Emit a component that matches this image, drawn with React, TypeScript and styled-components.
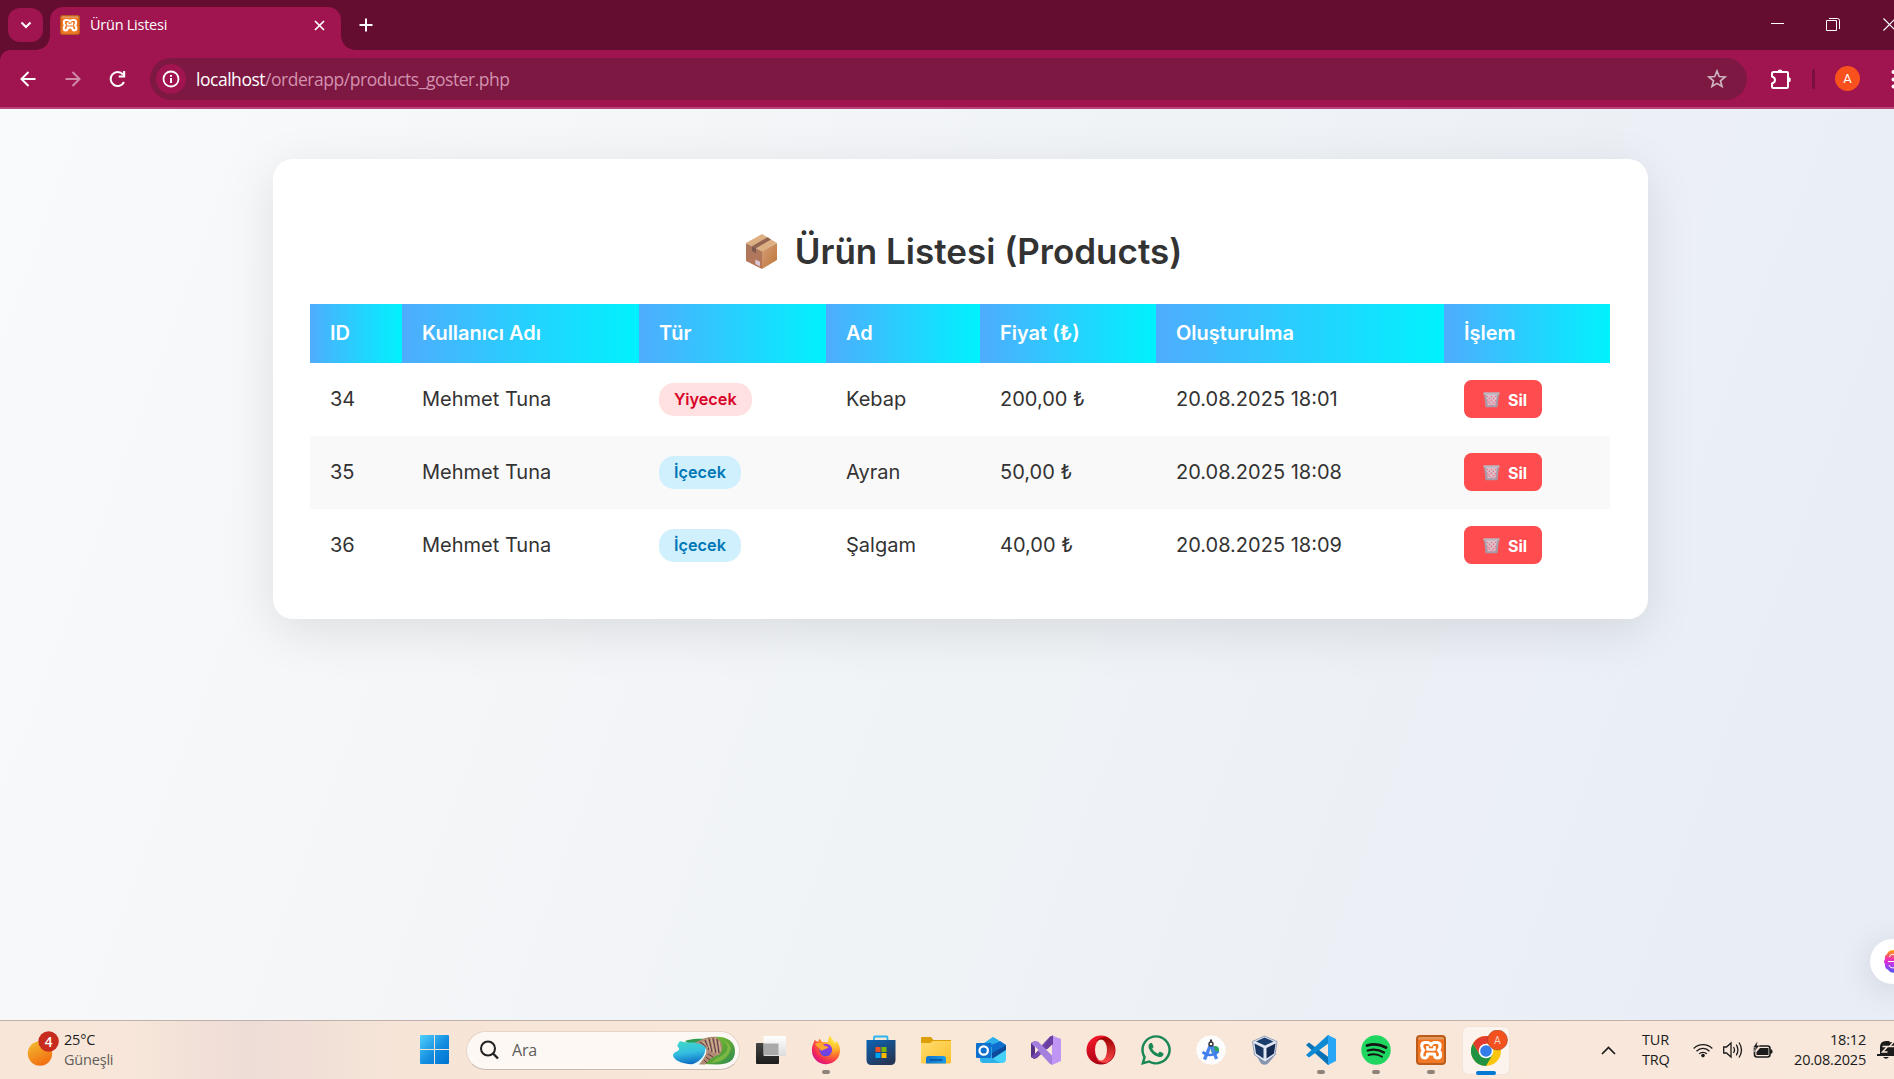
import React from "react";
import styled, { createGlobalStyle } from "styled-components";
import { FaWhatsapp } from "react-icons/fa";

const ui = `"Open Sans", "Noto Sans", sans-serif`;

const GlobalStyle = createGlobalStyle`
  html, body { margin: 0; overflow: hidden; }
  * { box-sizing: border-box; }
  svg { display: block; flex: none; }
`;

const Screen = styled.div`
  width: 1894px;
  height: 1079px;
  display: flex;
  flex-direction: column;
  overflow: hidden;
  font-family: ${ui};
`;

/* ---------- browser chrome ---------- */

const TabStrip = styled.header`
  height: 50px;
  flex: none;
  display: flex;
  align-items: flex-start;
  background: #640d30;
  color: #fff;
`;

const TabMenu = styled.button`
  width: 35px;
  height: 34px;
  margin: 8px 7px 0 8px;
  padding: 0;
  border: 0;
  border-radius: 12px;
  background: #a0154f;
  display: grid;
  place-items: center;
`;

const Tab = styled.div`
  position: relative;
  width: 291px;
  height: 43px;
  margin-top: 7px;
  padding: 0 16px 7px 10px;
  display: flex;
  align-items: center;
  border-radius: 13px 13px 0 0;
  background: #a0154f;
  &::before,
  &::after {
    content: "";
    position: absolute;
    bottom: 0;
    width: 14px;
    height: 14px;
  }
  &::before {
    left: -14px;
    background: radial-gradient(circle at 0 0, transparent 13.5px, #a0154f 14px);
  }
  &::after {
    right: -14px;
    background: radial-gradient(circle at 100% 0, transparent 13.5px, #a0154f 14px);
  }
`;

const TabTitle = styled.span`
  flex: 1;
  margin-left: 10px;
  font-size: 14.5px;
  letter-spacing: -0.25px;
  line-height: 20px;
`;

const NewTab = styled.span`
  margin: 18px 0 0 18px;
`;

const WindowButtons = styled.div`
  margin-left: auto;
  height: 50px;
  width: 124px;
  display: flex;
  gap: 42px;
  padding-top: 18px;
`;

const Toolbar = styled.div`
  height: 59px;
  flex: none;
  display: flex;
  align-items: center;
  background: radial-gradient(circle at 10px 10px, #a0154f 9.5px, #640d30 10px) 0 0 / 10px 10px no-repeat, #a0154f;
  border-bottom: 2px solid #b9447a;
`;

const NavSlot = styled.span<{ $w: number; $dim?: boolean }>`
  width: ${(p) => p.$w}px;
  flex: none;
  display: flex;
  justify-content: center;
  opacity: ${(p) => (p.$dim ? 0.5 : 1)};
`;

const AddressBar = styled.div`
  width: 1597px;
  height: 42px;
  flex: none;
  border-radius: 21px;
  background: #7d1842;
  display: flex;
  align-items: center;
  padding: 0 20px 0 6px;
`;

const SiteInfo = styled.span`
  width: 30px;
  height: 30px;
  border-radius: 50%;
  background: #a0154f;
  display: grid;
  place-items: center;
`;

const Url = styled.span`
  flex: 1;
  margin-left: 10px;
  color: #d391af;
  font-size: 17.5px;
  line-height: 26px;
  letter-spacing: -0.47px;
  b {
    font-weight: 400;
    color: #fff;
  }
`;

const ToolbarDivider = styled.span`
  width: 3px;
  height: 20px;
  flex: none;
  border-radius: 2px;
  background: #7a0f3d;
  margin: 0 20px 0 -1px;
`;

const Avatar = styled.span`
  width: 25px;
  height: 25px;
  flex: none;
  border-radius: 50%;
  background: #f9511d;
  color: #fff;
  font: 13px/25px Roboto, sans-serif;
  text-align: center;
  margin-right: 31px;
`;

/* ---------- page ---------- */

const Page = styled.main`
  position: relative;
  height: 911px;
  flex: none;
  overflow: hidden;
  padding: 50px 246px 0 273px;
  background: linear-gradient(110deg, #f9fafb 0%, #f0f3f6 52%, #e8edf6 96%);
  font-family: Inter, "Noto Sans", sans-serif;
  color: #333;
`;

const Card = styled.section`
  width: 1375px;
  height: 460px;
  padding: 65px 38px 0 37px;
  border-radius: 20px;
  background: #fff;
  box-shadow: 0 12px 50px rgba(0, 0, 0, 0.1);
`;

const Title = styled.h2`
  margin: 0 0 26px;
  height: 54px;
  padding-left: 7px;
  display: flex;
  align-items: center;
  justify-content: center;
  gap: 16px;
  font-size: 35px;
  font-weight: 600;
  line-height: 54px;
`;

const Table = styled.table`
  width: 1300px;
  table-layout: fixed;
  border-collapse: collapse;
  font-size: 20px;
`;

const Head = styled.th`
  height: 59px;
  padding: 0 0 1px 20px;
  text-align: left;
  font-weight: 600;
  color: #fff;
  background: linear-gradient(to right, #4facfe, #00f2fe);
`;

const Row = styled.tr`
  height: 73px;
  &:nth-child(even) {
    background: #f9f9f9;
  }
`;

const Cell = styled.td`
  padding: 0 0 2px 20px;
`;

const Badge = styled.span<{ $food?: boolean }>`
  display: block;
  width: fit-content;
  height: 33px;
  margin-top: 2px;
  padding: 0 15px;
  border-radius: 15px;
  font-size: 16.25px;
  font-weight: 600;
  line-height: 32px;
  background: ${(p) => (p.$food ? "#ffe1e1" : "#d0f0fd")};
  color: ${(p) => (p.$food ? "#d90429" : "#0077b6")};
`;

const DeleteButton = styled.button`
  width: 78px;
  height: 38px;
  display: flex;
  align-items: center;
  padding: 2px 0 0 19px;
  gap: 8px;
  border: 0;
  border-radius: 7.5px;
  background: #ff4d4f;
  color: #fff;
  font: 700 16px Inter, sans-serif;
`;

const Assistant = styled.div`
  position: absolute;
  left: 1870px;
  top: 830px;
  width: 45px;
  height: 45px;
  padding: 11px 0 0 14px;
  border-radius: 50%;
  background: #fff;
  box-shadow: 0 5px 34px rgba(0, 0, 0, 0.12);
`;

/* ---------- taskbar ---------- */

const Taskbar = styled.footer`
  height: 59px;
  flex: none;
  display: flex;
  align-items: center;
  border-top: 1px solid #bfb2aa;
  background: linear-gradient(90deg, #f8e7d8 0, #f7e6d9 130px, #eedcd7 250px, #f6e5d7 400px, #f9e8d8 900px, #f8e7db 1894px);
  color: #1b1b1b;
`;

const Weather = styled.div`
  width: 407px;
  display: flex;
  padding-left: 26px;
`;

const Lines = styled.div<{ $right?: boolean }>`
  display: flex;
  flex-direction: column;
  font-size: 14.5px;
  line-height: 20px;
  letter-spacing: -0.2px;
  text-align: ${(p) => (p.$right ? "right" : "left")};
  em {
    font-style: normal;
    color: #625d58;
  }
`;

const Search = styled.div`
  width: 274px;
  height: 39px;
  margin: 0 3px 0 4px;
  border: 1px solid #e6d5c8;
  border-bottom-color: #c9bbb1;
  border-radius: 20px;
  background: #fdf8f4;
  display: flex;
  align-items: center;
  padding: 0 3px 0 13px;
  color: #5f5c59;
  font-size: 16px;
  span {
    flex: 1;
    margin-left: 13px;
    letter-spacing: -0.2px;
  }
`;

const AppSlot = styled.div<{ $active?: boolean }>`
  width: ${(p) => (p.$active ? 48 : 55)}px;
  height: ${(p) => (p.$active ? 49 : 58)}px;
  margin-left: ${(p) => (p.$active ? 4 : 0)}px;
  padding-top: ${(p) => (p.$active ? 9 : 14)}px;
  border-radius: 6px;
  background: ${(p) => (p.$active ? "#fdf3ed" : "transparent")};
  border: ${(p) => (p.$active ? "1px solid #f2e2d8" : "0")};
  display: flex;
  flex-direction: column;
  align-items: center;
  gap: 5px;
`;

const ChromeWrap = styled.div`
  margin: -6px -8px 0 0;
`;

const Running = styled.i<{ $active?: boolean }>`
  width: ${(p) => (p.$active ? 20 : 8)}px;
  height: 4px;
  flex: none;
  border-radius: 2px;
  background: ${(p) => (p.$active ? "#0078d4" : "#8d837b")};
`;

const Tray = styled.div`
  margin-left: auto;
  width: 294px;
  height: 58px;
  display: flex;
  align-items: center;
`;

const TrayItem = styled.div<{ $w: number; $end?: boolean }>`
  width: ${(p) => p.$w}px;
  flex: none;
  display: flex;
  justify-content: ${(p) => (p.$end ? "flex-end" : "flex-start")};
`;

/* ---------- drawings ---------- */

const Xampp = ({ size }: { size: number }) => (
  <svg width={size} height={size} viewBox="0 0 30 30">
    <defs><linearGradient id="xa" x1="0" y1="0" x2="0" y2="1"><stop stopColor="#e3975c" /><stop offset=".1" stopColor="#e3975c" /><stop offset=".16" stopColor="#f2701c" /><stop offset="1" stopColor="#f07b2a" /></linearGradient></defs>
    <rect x="1" y="1" width="28" height="28" rx="3" fill="url(#xa)" stroke="#bb5c1b" strokeWidth="2" />
    <path d="M9 7.500H11Q14 7.500 15 10 16 7.500 19 7.500H21Q24.500 7.500 24 11.500 24 14 22.500 15.300 24.500 17 24.500 20 24.500 23 21.500 23 19 23 18.500 20.500V19H11.500V20.500Q11 23 8.500 23 5.500 23 5.800 19.500 6 17 7.500 15.300 5.500 13.500 5.800 10.500 6 7.500 9 7.500Z" fill="none" stroke="#fff" strokeWidth="3.200" strokeLinejoin="round" />
    <path d="M11.500 11V14.500H18.500V11" fill="none" stroke="#fff" strokeWidth="2.600" strokeLinejoin="round" />
  </svg>
);

const Box = () => (
  <svg width="34" height="36" viewBox="0 0 34 36">
    <defs>
      <linearGradient id="bl" x1="0" y1="0" x2="0" y2="1"><stop stopColor="#a9795f" /><stop offset="1" stopColor="#b87558" /></linearGradient>
      <linearGradient id="br" x1="0" y1="0" x2="1" y2="1"><stop stopColor="#d69f7c" /><stop offset="1" stopColor="#bd7433" /></linearGradient>
    </defs>
    <path d="M1 10 17 18V36L1 28Z" fill="url(#bl)" />
    <path d="M17 18 32 10V27L17 36Z" fill="url(#br)" />
    <path d="M17 1 32 10 17 18.500 1 10Z" fill="#dcb082" />
    <path d="M22.500 4.300 26 6.400 11 15.300 7 13.200Z" fill="#936451" />
    <path d="M7 13.200 11 15.300V20.200L7 18Z" fill="#7d5850" />
    <path d="M10.300 26.500 15 28.800V33.600L10.300 31Z" fill="#d9c7d8" />
  </svg>
);

const Bin = () => (
  <svg width="17" height="17" viewBox="0 0 17 17">
    <path d="M1.500 2H15.500L14 16H3Z" fill="#dcbfcb" />
    <path d="M4 5 12.500 14M8 5l5 5M4.500 10l4 4.500M13 5 4 13M9 5 4 9.500M13 9.500 8 14.500" stroke="#f0627a" strokeWidth="1" strokeDasharray="1.400 1.200" />
    <path d="M2 3 3.600 15.200H13.400L15 3" fill="none" stroke="#a59aa8" strokeWidth="2" />
    <path d="M.5 1.300H16.500V3.600H.5Z" fill="#bdb5bf" />
  </svg>
);

const Brain = () => (
  <svg width="23" height="23" viewBox="0 0 23 23">
    <defs><linearGradient id="brn" x1="0" y1="0" x2="0" y2="1"><stop stopColor="#ffa000" /><stop offset=".4" stopColor="#f02fb0" /><stop offset=".65" stopColor="#b838ef" /><stop offset="1" stopColor="#4b56f5" /></linearGradient></defs>
    <path d="M11 .5C7-.6 4 1 3 4 .8 5.500.6 7.500 1 9.200-.3 11-.3 12.500 1 14c-.3 3 .8 4.700 3 5.500 1.500 2.800 4 3.500 8 3V.5Z" fill="url(#brn)" />
    <path d="M4 11.500H12M5.500 7c0-2 2-3 5-2.500M5 15c.5 2.500 3 3.500 6 2.500" stroke="#fff" strokeWidth="1" fill="none" />
  </svg>
);

const WeatherIcon = () => (
  <svg width="34" height="40" viewBox="0 0 34 40">
    <defs><linearGradient id="sun" x1=".2" y1="0" x2=".7" y2="1"><stop stopColor="#f2b830" /><stop offset="1" stopColor="#f26b0e" /></linearGradient></defs>
    <circle cx="14" cy="23.500" r="12.200" fill="url(#sun)" />
    <circle cx="22.600" cy="11.500" r="10.200" fill="#c62b1e" />
    <text x="22.600" y="16.500" textAnchor="middle" fontSize="13.500" fontFamily="Open Sans" fontWeight="600" fill="#fff">4</text>
  </svg>
);

const Windows = () => (
  <svg width="29" height="29" viewBox="0 0 29 29">
    <defs><linearGradient id="win" gradientUnits="userSpaceOnUse" x1="0" y1="0" x2="29" y2="29"><stop stopColor="#4fd0fd" /><stop offset=".55" stopColor="#128de0" /><stop offset="1" stopColor="#0072d2" /></linearGradient></defs>
    <path d="M1 0H14V14H0V1Q0 0 1 0ZM15 0H28Q29 0 29 1V14H15ZM0 15H14V29H1Q0 29 0 28ZM15 15H29V28Q29 29 28 29H15Z" fill="url(#win)" />
  </svg>
);

const Coast = () => (
  <svg width="63" height="29" viewBox="0 0 63 29">
    <defs>
      <linearGradient id="sea" x1=".3" y1="0" x2=".5" y2="1"><stop stopColor="#3fd8c8" /><stop offset=".5" stopColor="#35bfe0" /><stop offset="1" stopColor="#0d6cc4" /></linearGradient>
      <linearGradient id="grass" x1="0" y1="0" x2="1" y2="1"><stop stopColor="#8cc63c" /><stop offset=".55" stopColor="#5aa437" /><stop offset="1" stopColor="#2b8b57" /></linearGradient>
    </defs>
    <path d="M38 1.500C49-1 62 3 62 15 62 25 55 28.500 44 28.500L30 28Z" fill="url(#grass)" />
    <path d="M50 5C58 9 55 18 44 22L38 27Q55 26 58 12Q56 6 50 5Z" fill="#a8cf46" opacity=".5" />
    <path d="M12 5C20 2 28 3 35 2.500L30 9 16 8Z" fill="#2f9a52" />
    <path d="M7 5C13 8 24 5 31 8 36 12 34 23 22 28 10 29 0 24 0 19 1 15 7 16 6 12 3 10 5 8 7 5Z" fill="url(#sea)" />
    <path d="M32 12C33 19 28 25 19 28.500L27 28.500 35 18Z" fill="#eaf8fd" />
    <path d="M21 7C29 4 34 0 43 1 50 5 51 14 46 19 39 21 36 24 32 28.500H26C31 22 35 17 33 12Q29 7 21 7Z" fill="#b08a72" />
    <path d="M27 6 34 11M32 4 36 14M36 2.500 39 16M40 2 43 17M44 3 46 17M35 18 40 21M33 21 37 24M31 24 34 27" stroke="#5e3a4a" strokeWidth="1" fill="none" />
    <path d="M29.500 5 35 12M34 3 37.500 15M38 2 41 17M42 2 44.500 18M46 5 47.500 15" stroke="#e0c3a0" strokeWidth=".8" fill="none" />
  </svg>
);

const TaskView = () => (
  <svg width="30" height="30" viewBox="0 0 30 30">
    <defs>
      <linearGradient id="tv" x1="0" y1="0" x2="0" y2="1"><stop stopColor="#444" /><stop offset="1" stopColor="#1c1c1c" /></linearGradient>
      <linearGradient id="tw" x1="0" y1="0" x2="0" y2="1"><stop stopColor="#fff" /><stop offset="1" stopColor="#dcdcdc" /></linearGradient>
    </defs>
    <rect x="0" y="8" width="23" height="21" rx="1" fill="url(#tv)" />
    <rect x="7.500" y="1" width="22.500" height="20" rx="1" fill="url(#tw)" />
    <path d="M8 8.500H22.500V20H8Z" fill="#a9a9a9" />
  </svg>
);

const Firefox = () => (
  <svg width="30" height="30" viewBox="0 0 30 30">
    <defs>
      <radialGradient id="ff" cx=".8" cy=".12" r="1"><stop stopColor="#fff44f" /><stop offset=".35" stopColor="#ffb52a" /><stop offset=".6" stopColor="#ff6a2f" /><stop offset=".85" stopColor="#f0255e" /><stop offset="1" stopColor="#d7148b" /></radialGradient>
      <linearGradient id="fg" x1="0" y1="0" x2="0" y2="1"><stop stopColor="#a033e8" /><stop offset="1" stopColor="#5d4ade" /></linearGradient>
    </defs>
    <path d="M1 16C.5 11 3 8 3.500 5L7 7 8.500 3.500 11 7H17C17 4 18 2 19.500.5 20 4 23 5 24 8L25.500 6C28 9 29 12 29 15.500A14 13.500 0 0 1 1 16Z" fill="url(#ff)" />
    <circle cx="14.800" cy="15" r="6.300" fill="url(#fg)" />
    <path d="M4 9C8 6.500 12 8 13 10.500L17.500 12C16 14.500 13 13.500 10.500 16 9 13 6 12 4 9Z" fill="#ffa62e" />
  </svg>
);

const Store = () => (
  <svg width="30" height="30" viewBox="0 0 30 30">
    <defs><linearGradient id="st" x1="0" y1="0" x2=".6" y2="1"><stop stopColor="#0b64b3" /><stop offset="1" stopColor="#263657" /></linearGradient></defs>
    <path d="M8 7V2.500Q8 1.500 9 1.500H20.500Q21.500 1.500 21.500 2.500V7" fill="none" stroke="#28b4ef" strokeWidth="1.800" />
    <path d="M.5 5H29.500V25Q29.500 30 24.500 30H5.500Q.5 30 .5 25Z" fill="url(#st)" />
    <path d="M9.500 12H14.500V17H9.500Z" fill="#f25022" /><path d="M15.500 12H20.500V17H15.500Z" fill="#7fba00" />
    <path d="M9.500 18H14.500V23H9.500Z" fill="#00a4ef" /><path d="M15.500 18H20.500V23H15.500Z" fill="#ffb900" />
  </svg>
);

const Folder = () => (
  <svg width="30" height="30" viewBox="0 0 30 30">
    <defs>
      <linearGradient id="fo" x1="0" y1="0" x2="1" y2="1"><stop stopColor="#ffdc70" /><stop offset="1" stopColor="#fdc02b" /></linearGradient>
      <linearGradient id="fb" x1="0" y1="0" x2="1" y2="0"><stop stopColor="#0d74cf" /><stop offset="1" stopColor="#1f9be6" /></linearGradient>
    </defs>
    <path d="M0 3Q0 2 1 2H10L12.500 5H30V8H0Z" fill="#dd9f08" />
    <path d="M0 8H9L12 6H30V27.500Q30 28.500 29 28.500H1Q0 28.500 0 27.500Z" fill="url(#fo)" />
    <path d="M5 28.500V23.500Q5 21 7.500 21H22.500Q25 21 25 23.500V28.500Z" fill="url(#fb)" />
    <path d="M9 25H21" stroke="#0a4c95" strokeWidth="1.300" strokeLinecap="round" />
  </svg>
);

const Outlook = () => (
  <svg width="30" height="30" viewBox="0 0 30 30">
    <path d="M4 11 17 2 30 10V24Q30 28 26 28H8Q4 28 4 24Z" fill="#46d2f8" />
    <path d="M4 11 17 2 23 5.500 12 13H4Z" fill="#2eaee8" />
    <path d="M11 12 24 6 30 10 16 19V12Z" fill="#0f6fcf" />
    <path d="M30 10V15L16 24V18Z" fill="#0c4b9c" />
    <path d="M4 22 16 23 24 28H8Q4 28 4 24Z" fill="#2fb1ec" />
    <rect x="0" y="8" width="15.500" height="15" rx="1" fill="#0f70cd" />
    <circle cx="7.700" cy="15.500" r="4.200" fill="none" stroke="#fff" strokeWidth="2.200" />
  </svg>
);

const VisualStudio = () => (
  <svg width="30" height="30" viewBox="0 0 30 30">
    <path d="M0 8 4 6V24L0 22Z" fill="#553085" />
    <path d="M3 24 0 22 19 1.500 22 .5V8L6 23Z" fill="#7548ac" />
    <path d="M0 8 4 6 7 6.500 22 21.500V30L19 29Z" fill="#a57fdd" />
    <path d="M21 .5 30 4V26L21 30Z" fill="#c096f4" />
    <path d="M22 .5V9L16 14.500 13.500 11 19 2Z" fill="#6a3fa0" />
    <path d="M21 10V20L16 15Z" fill="#f9e8d8" />
    <path d="M4 11.500V18.500L7.500 15Z" fill="#f9e8d8" />
  </svg>
);

const Opera = () => (
  <svg width="30" height="30" viewBox="0 0 30 30">
    <defs><linearGradient id="op" x1="0" y1="0" x2=".35" y2="1"><stop stopColor="#ff1b2d" /><stop offset="1" stopColor="#a70014" /></linearGradient>
    <linearGradient id="oq" x1="0" y1="0" x2="0" y2="1"><stop stopColor="#9c0000" /><stop offset="1" stopColor="#ff4b4b" /></linearGradient></defs>
    <circle cx="15" cy="15" r="14.500" fill="url(#op)" />
    <path d="M10 6Q15 1 21.500 2.500A14.500 14.500 0 0 1 21.500 27.500Q15 29 10 24 20 27 21 15 20 3 10 6Z" fill="url(#oq)" />
    <ellipse cx="15" cy="15" rx="6" ry="10.500" fill="#f9e8d8" />
  </svg>
);

const Studio = () => (
  <svg width="30" height="30" viewBox="0 0 30 30">
    <circle cx="15" cy="15" r="14.300" fill="#fdfdfd" stroke="#fff" strokeDasharray="3 2" />
    <circle cx="19" cy="15" r="4" fill="#2fa35b" />
    <path d="M15 9 8.500 24.500M15 9 20.500 24" stroke="#4b86f0" strokeWidth="3.400" />
    <path d="M6.500 17C11 21 18 21 22.500 16.500" fill="none" stroke="#3f7dec" strokeWidth="2.400" />
    <path d="M15 4.500V8" stroke="#333" strokeWidth="2" /><circle cx="15" cy="9" r="2" fill="#fff" stroke="#333" strokeWidth="1.400" />
  </svg>
);

const VirtualBox = () => (
  <svg width="30" height="30" viewBox="0 0 30 30">
    <path d="M5 20 10 28.500Q13.500 31 17 28.500L25 19Z" fill="#8793ad" />
    <path d="M13.500 1 26 6.500 24 20 14 27 3.500 20 1.500 6.500Z" fill="#dfe6f1" stroke="#7d8fae" strokeWidth=".8" />
    <path d="M13.500 2.500 22.500 6.500 14 10.500 5 6.500Z" fill="#1b3d6c" />
    <path d="M3.500 8.500 12.500 13V23.500L5 18.500Z" fill="#1a3561" /><path d="M24.500 8.500 15.500 13V23.500L23 18.500Z" fill="#142a50" />
  </svg>
);

const Code = () => (
  <svg width="30" height="30" viewBox="0 0 30 30">
    <path d="M0 10 3 7.500 23 22.500V30L22 30Z" fill="#0a73b8" />
    <path d="M0 20 3 22.500 23 8V0H22Z" fill="#0e8ad4" />
    <path d="M22 0 30 4V26L22 30Z" fill="#29a6f5" />
  </svg>
);

const Spotify = () => (
  <svg width="30" height="30" viewBox="0 0 30 30">
    <circle cx="15" cy="15" r="14.700" fill="#1fd760" />
    <g fill="none" stroke="#141414" strokeLinecap="round"><path d="M6 10.500C12 8.500 19 9.200 25 12.500" strokeWidth="2.800" /><path d="M6.800 15.500C12 14 18 14.500 23 17.500" strokeWidth="2.300" /><path d="M7.500 20C12 18.800 17 19.200 21 21.700" strokeWidth="1.900" /></g>
  </svg>
);

const Chrome = () => (
  <svg width="38" height="36" viewBox="0 0 38 36">
    <circle cx="15" cy="21" r="15" fill="#fcc60e" />
    <path d="M2 13.500A15 15 0 0 1 28 13.500H15V21L8.500 24.800Z" fill="#e33b2e" />
    <path d="M2 13.500 8.500 24.800 15 21 21.500 24.700 15 36A15 15 0 0 1 2 13.500Z" fill="#229342" />
    <circle cx="15" cy="21" r="7.300" fill="#fff" /><circle cx="15" cy="21" r="5.800" fill="#347de8" />
    <circle cx="26.500" cy="10" r="10" fill="#f4511e" stroke="#99452c" strokeWidth=".6" />
    <text x="26.500" y="14" textAnchor="middle" fontFamily="Roboto" fontSize="10.500" fill="#f6d3c5">A</text>
  </svg>
);

type Product = { id: number; user: string; type: string; name: string; price: string; created: string };

const columns: [string, number][] = [
  ["ID", 92], ["Kullanıcı Adı", 237], ["Tür", 187], ["Ad", 154], ["Fiyat (₺)", 176], ["Oluşturulma", 288], ["İşlem", 166],
];

const products: Product[] = [
  { id: 34, user: "Mehmet Tuna", type: "Yiyecek", name: "Kebap", price: "200,00 ₺", created: "20.08.2025 18:01" },
  { id: 35, user: "Mehmet Tuna", type: "İçecek", name: "Ayran", price: "50,00 ₺", created: "20.08.2025 18:08" },
  { id: 36, user: "Mehmet Tuna", type: "İçecek", name: "Şalgam", price: "40,00 ₺", created: "20.08.2025 18:09" },
];

const WhatsApp = styled(FaWhatsapp)`
  margin: -2px;
`;

const apps: { icon: React.ReactNode; running?: boolean }[] = [
  { icon: <TaskView /> },
  { icon: <Firefox />, running: true },
  { icon: <Store /> },
  { icon: <Folder /> },
  { icon: <Outlook /> },
  { icon: <VisualStudio /> },
  { icon: <Opera /> },
  { icon: <WhatsApp size={34} color="#1b8755" /> },
  { icon: <Studio /> },
  { icon: <VirtualBox /> },
  { icon: <Code />, running: true },
  { icon: <Spotify />, running: true },
  { icon: <Xampp size={30} />, running: true },
];

const WeatherText = styled(Lines)`
  margin-left: 4px;
`;

const stroke = { fill: "none", stroke: "#fff", strokeWidth: 2 };

export default function App() {
  return (
    <Screen>
      <GlobalStyle />
      <TabStrip>
        <TabMenu>
          <svg width="12" height="8" viewBox="0 0 12 8"><path d="M1.500 1.500 6 6 10.500 1.500" {...stroke} /></svg>
        </TabMenu>
        <Tab>
          <Xampp size={20} />
          <TabTitle>Ürün Listesi</TabTitle>
          <svg width="11" height="11" viewBox="0 0 11 11"><path d="M1 1 10 10M10 1 1 10" {...stroke} strokeWidth={1.700} /></svg>
        </Tab>
        <NewTab><svg width="14" height="14" viewBox="0 0 14 14"><path d="M7 .5V13.500M.5 7H13.500" {...stroke} /></svg></NewTab>
        <WindowButtons>
          <svg width="14" height="14" viewBox="0 0 14 14"><path d="M1 5.500H14" {...stroke} strokeWidth={1} /></svg>
          <svg width="14" height="14" viewBox="0 0 14 14"><path d="M.5 2.500H10.500V12.500H.5ZM3 .5H11.500Q13.500.5 13.500 2.500V11" {...stroke} strokeWidth={1} /></svg>
          <svg width="14" height="14" viewBox="0 0 14 14"><path d="M1.500 .5 13.500 12.500M13.500 .5 1.500 12.500" {...stroke} strokeWidth={1.200} /></svg>
        </WindowButtons>
      </TabStrip>
      <Toolbar>
        <NavSlot $w={55}><svg width="16" height="16" viewBox="0 0 16 16"><path d="M15.500 8H2M8.500 1 1.500 8 8.500 15" {...stroke} /></svg></NavSlot>
        <NavSlot $w={35} $dim><svg width="16" height="16" viewBox="0 0 16 16"><path d="M.5 8H14M7.500 1 14.500 8 7.500 15" {...stroke} /></svg></NavSlot>
        <NavSlot $w={60}><svg width="22" height="18" viewBox="-1 0 22 18"><path d="M14 12A7 7 0 1 1 13 4.500" {...stroke} /><path d="M15.200 1V7.500H8.700V5.500H13V1Z" fill="#fff" /></svg></NavSlot>
        <AddressBar>
          <SiteInfo><svg width="18" height="18" viewBox="0 0 18 18"><circle cx="9" cy="9" r="7.500" {...stroke} strokeWidth={1.800} /><path d="M9 8V13M9 5V6.800" {...stroke} /></svg></SiteInfo>
          <Url><b>localhost</b>/orderapp/products_goster.php</Url>
          <svg width="20" height="20" viewBox="0 0 20 20"><path d="M10 2 12.200 7.500 18 8 13.500 11.800 15 17.500 10 14.400 5 17.500 6.500 11.800 2 8 7.800 7.500Z" fill="none" stroke="#cdb3bf" strokeWidth="1.700" /></svg>
        </AddressBar>
        <NavSlot $w={66}>
          <svg width="24" height="22" viewBox="-2 0 24 22"><path d="M2 5.500Q2 4 3.500 4H17Q18 4 18 5V18.500Q18 20 16.500 20H3.500Q2 20 2 18.500V15.500Q5 14.500 5 12T2 8.500Z" {...stroke} /><path d="M7.500 4A2.500 2.500 0 0 1 12.500 4ZM18 9A2.600 2.600 0 0 1 18 14.500Z" fill="#fff" /></svg>
        </NavSlot>
        <ToolbarDivider />
        <Avatar>A</Avatar>
        <svg width="5" height="20" viewBox="0 0 5 20"><g fill="#fff"><circle cx="2.500" cy="3" r="2" /><circle cx="2.500" cy="10.500" r="2" /><circle cx="2.500" cy="17.500" r="2" /></g></svg>
      </Toolbar>

      <Page>
        <Card>
          <Title><Box />Ürün Listesi (Products)</Title>
          <Table>
            <colgroup>{columns.map(([name, w]) => <col key={name} width={w} />)}</colgroup>
            <thead><tr>{columns.map(([name]) => <Head key={name}>{name}</Head>)}</tr></thead>
            <tbody>
              {products.map((p) => (
                <Row key={p.id}>
                  <Cell>{p.id}</Cell>
                  <Cell>{p.user}</Cell>
                  <Cell><Badge $food={p.type === "Yiyecek"}>{p.type}</Badge></Cell>
                  <Cell>{p.name}</Cell>
                  <Cell>{p.price}</Cell>
                  <Cell>{p.created}</Cell>
                  <Cell><DeleteButton><Bin />Sil</DeleteButton></Cell>
                </Row>
              ))}
            </tbody>
          </Table>
        </Card>
        <Assistant><Brain /></Assistant>
      </Page>

      <Taskbar>
        <Weather>
          <WeatherIcon />
          <WeatherText><span>25°C</span><em>Güneşli</em></WeatherText>
        </Weather>
        <AppSlot><Windows /></AppSlot>
        <Search>
          <svg width="19" height="20" viewBox="0 0 19 20"><circle cx="8" cy="8.500" r="7" fill="none" stroke="#222" strokeWidth="2" /><path d="M13 13.500 18 18.500" stroke="#222" strokeWidth="2.400" /></svg>
          <span>Ara</span>
          <Coast />
        </Search>
        {apps.map((a, i) => (
          <AppSlot key={i}>{a.icon}{a.running && <Running />}</AppSlot>
        ))}
        <AppSlot $active>
          <ChromeWrap><Chrome /></ChromeWrap>
          <Running $active />
        </AppSlot>
        <Tray>
          <TrayItem $w={42}><svg width="16" height="9" viewBox="-1 0 16 9"><path d="M1 8 7.500 1.500 14 8" fill="none" stroke="#1b1b1b" strokeWidth="1.700" /></svg></TrayItem>
          <TrayItem $w={51}><Lines><span>TUR</span><span>TRQ</span></Lines></TrayItem>
          <TrayItem $w={30}>
            <svg width="20" height="16" viewBox="0 0 20 16"><g fill="none" stroke="#1b1b1b" strokeWidth="1.300"><path d="M.7 6.500A13 13 0 0 1 19.300 6.500M3.500 9.200A9 9 0 0 1 16.500 9.200M6.200 11.800A5.500 5.500 0 0 1 13.800 11.800" /></g><circle cx="10" cy="13.600" r="1.800" fill="#1b1b1b" /></svg>
          </TrayItem>
          <TrayItem $w={30}>
            <svg width="20" height="18" viewBox="0 0 20 18"><g fill="none" stroke="#1b1b1b" strokeWidth="1.300"><path d="M.7 6H3.500L8 2V16L3.500 12H.7ZM10.500 6Q12.500 9 10.500 12M13.300 3.700Q16.500 9 13.300 14.300M16 1.500Q21 9 16 16.500" /></g></svg>
          </TrayItem>
          <TrayItem $w={20}>
            <svg width="20" height="18" viewBox="0 0 20 18"><rect x="1.500" y="5" width="15.500" height="11" rx="2.500" fill="none" stroke="#1b1b1b" strokeWidth="1.600" /><path d="M17 8.500H19Q20 10.500 19 12.500H17Z" fill="#1b1b1b" /><path d="M7 7H15.500V14H3.500V11Z" fill="#1b1b1b" /><path d="M4.500 0 0 6.500H2.500L1 11 6.500 4.500H4Z" fill="#1b1b1b" stroke="#f8e7db" strokeWidth=".5" /></svg>
          </TrayItem>
          <TrayItem $w={93} $end><Lines $right><span>18:12</span><span>20.08.2025</span></Lines></TrayItem>
          <TrayItem $w={28}>
            <svg width="31" height="20" viewBox="-11 0 31 20"><path d="M3 15V7Q3 1 9 1H20V15Z" fill="#1b1b1b" /><path d="M0 14H20V16H0ZM6 17H12Q9 20.500 6 17Z" fill="#1b1b1b" /><path d="M5.500 6.500H10.500L5.500 12H10.500M12.500 1.500H17L12.500 6.500H17" fill="none" stroke="#f8e7db" strokeWidth="1.500" /></svg>
          </TrayItem>
        </Tray>
      </Taskbar>
    </Screen>
  );
}
